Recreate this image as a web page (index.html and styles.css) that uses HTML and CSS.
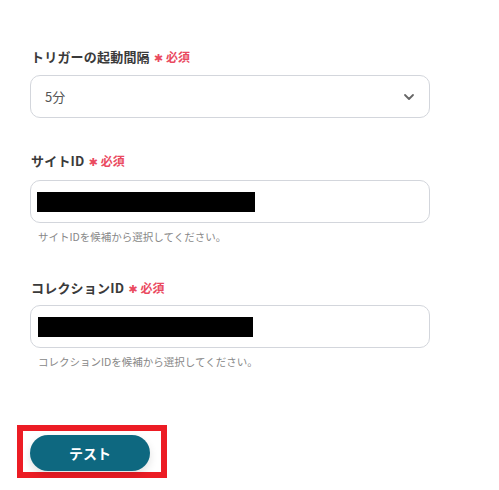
FILE: index.html
```html
<!DOCTYPE html>
<html lang="ja">
<head>
<meta charset="utf-8">
<link rel="stylesheet" href="styles.css">
</head>
<body>
<div class="form">
  <div class="field">
    <div class="label">トリガーの起動間隔<span class="req"><span class="ast">✱</span>必須</span></div>
    <div class="control select">
      <span class="value">5分</span>
      <svg class="chev" width="12" height="8" viewBox="0 0 12 8"><path d="M2 2l4 4 4-4" fill="none" stroke="#666" stroke-width="1.8" stroke-linecap="round" stroke-linejoin="round"/></svg>
    </div>
  </div>
  <div class="field">
    <div class="label">サイトID<span class="req"><span class="ast">✱</span>必須</span></div>
    <div class="control input"><span class="redact r1"></span></div>
    <div class="help">サイトIDを候補から選択してください。</div>
  </div>
  <div class="field">
    <div class="label">コレクションID<span class="req"><span class="ast">✱</span>必須</span></div>
    <div class="control input tight"><span class="redact r2"></span></div>
    <div class="help">コレクションIDを候補から選択してください。</div>
  </div>
  <div class="actions">
    <div class="highlight"><button class="btn">テスト</button></div>
  </div>
</div>
</body>
</html>
```
FILE: styles.css
```css
html, body { margin: 0; padding: 0; background: #fff; }
body { font-family: "Noto Sans CJK JP", "Noto Sans", sans-serif; color: #333; }
.form { padding: 47px 0 0 30px; width: 400px; }
.field { display: flex; flex-direction: column; }
.field + .field { margin-top: 33px; }
.label { font-size: 13px; font-weight: 700; line-height: 20px; color: #3a3a3a; display: flex; align-items: center; padding-left: 1px; letter-spacing: 0.2px; }
.req { color: #ea4a5f; font-size: 12px; font-weight: 700; margin-left: 4px; display: flex; align-items: center; letter-spacing: 0; }
.ast { font-family: "DejaVu Sans", sans-serif; font-size: 11px; margin-right: 3px; line-height: 1; position: relative; top: 1px; }
.control { box-sizing: border-box; height: 43px; margin-top: 8px; border: 1px solid #d3d6dc; border-radius: 10px; display: flex; align-items: center; padding: 0 12px 0 6px; background: #fff; }
.select { padding-left: 14px; justify-content: space-between; }
.value { font-size: 13px; color: #555; }
.chev { margin-right: 2px; }
.input { margin-top: 9px; }
.input.tight { margin-top: 7px; }
.redact { display: block; height: 20px; background: #000; }
.r1 { width: 218px; }
.r2 { width: 215px; margin-left: 1px; }
.help { font-size: 10.5px; color: #888; line-height: 16px; margin-top: 6px; padding-left: 8px; }
.actions { margin-top: 55px; margin-left: -13px; }
.highlight { display: inline-block; border: 6px solid #ec1c24; padding: 4px 11px 1px 7px; }
.btn { display: block; width: 120px; height: 36px; border: none; border-radius: 18px; background: #0e6880; color: #fff; font-family: inherit; font-size: 14px; font-weight: 700; box-shadow: 0 4px 8px rgba(0,0,0,0.12); }
```
